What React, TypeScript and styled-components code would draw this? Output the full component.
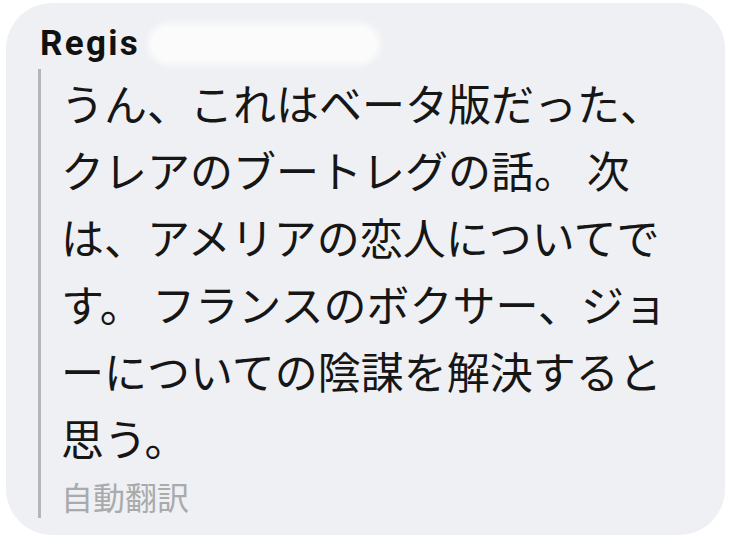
import styled, { createGlobalStyle } from "styled-components";

const GlobalStyle = createGlobalStyle`
  html, body {
    margin: 0;
    padding: 0;
    background: #ffffff;
  }
`;

const Page = styled.main`
  padding: 3px 6px;
`;

const Bubble = styled.section`
  box-sizing: border-box;
  width: 719px;
  height: 532px;
  padding: 21px 39px 16px 32px;
  border-radius: 46px;
  background: #eff0f3;
`;

const Header = styled.div`
  display: flex;
  align-items: center;
  gap: 8px;
  height: 40px;
  margin-bottom: 5px;
`;

const SenderName = styled.span`
  font-family: Roboto, "Liberation Sans", sans-serif;
  font-weight: 700;
  font-size: 35px;
  line-height: 40px;
  letter-spacing: 2.3px;
  color: #111111;
  margin-left: 2px;
`;

const HiddenName = styled.span`
  width: 232px;
  height: 42px;
  border-radius: 21px;
  background: #fbfbfb;
  filter: blur(3px);
`;

const Quote = styled.div`
  border-left: 3px solid #b5b5b7;
  padding-left: 20px;
`;

const MessageText = styled.p`
  margin: 0;
  width: 625px;
  font-family: "Noto Sans CJK JP", "Noto Sans", sans-serif;
  font-size: 43px;
  line-height: 67px;
  color: #161616;
`;

const TranslationTag = styled.div`
  margin-top: 3px;
  font-family: "Noto Sans CJK JP", "Noto Sans", sans-serif;
  font-size: 32px;
  line-height: 44px;
  color: #a9aaac;
`;

const message =
  "うん、これはベータ版だった、クレアのブートレグの話。 次は、アメリアの恋人についてです。 フランスのボクサー、ジョーについての陰謀を解決すると思う。";

const App = () => {
  return (
    <>
      <GlobalStyle />
      <Page>
        <Bubble>
          <Header>
            <SenderName>Regis</SenderName>
            <HiddenName />
          </Header>
          <Quote>
            <MessageText>{message}</MessageText>
            <TranslationTag>自動翻訳</TranslationTag>
          </Quote>
        </Bubble>
      </Page>
    </>
  );
};

export default App;
